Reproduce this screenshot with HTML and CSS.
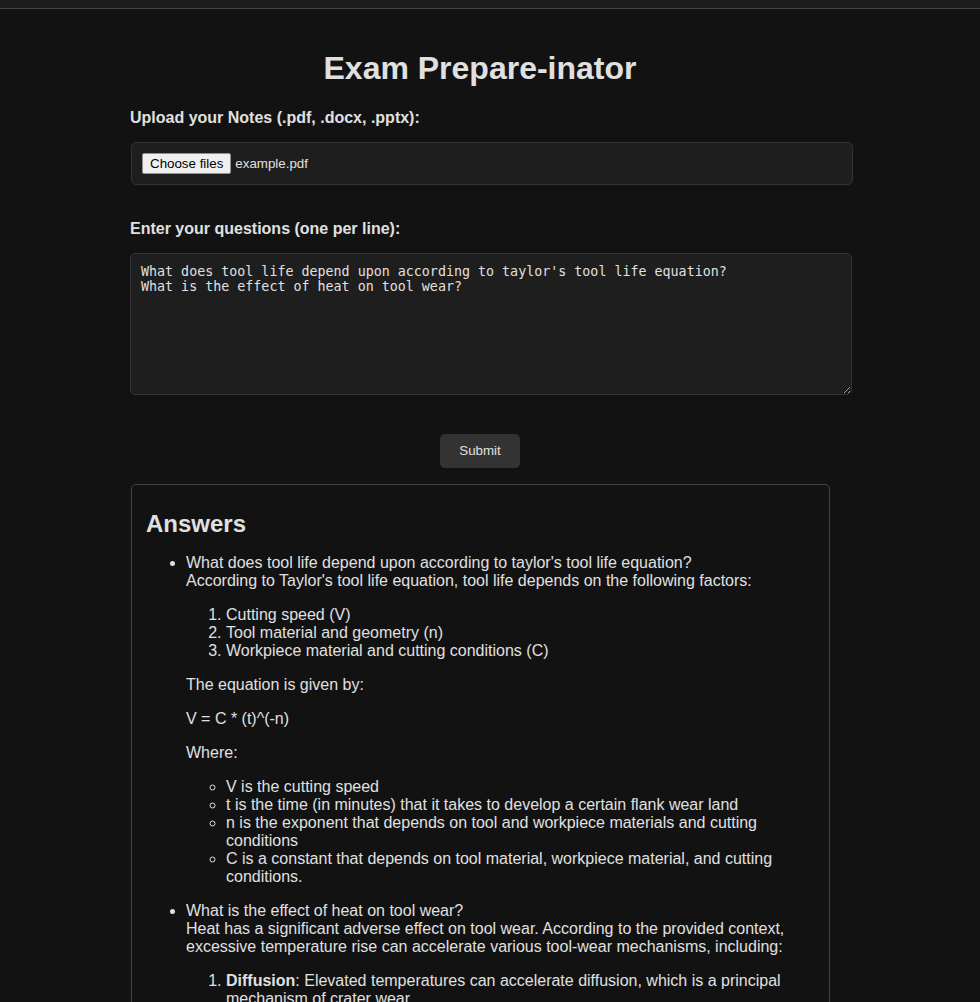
FILE: index.html
```html
<!DOCTYPE html>
<html lang="en">
<head>
<meta charset="utf-8">
<title>Exam Prepare-inator</title>
<link rel="stylesheet" href="styles.css">
</head>
<body>
<div class="topbar"></div>
<main class="page">
  <div class="container">
    <h1 class="title">Exam Prepare-inator</h1>
    <form class="form">
      <div class="field">
        <label class="label">Upload your Notes (.pdf, .docx, .pptx):</label>
        <div class="file-input"><span class="file-btn">Choose files</span><span class="file-name">example.pdf</span></div>
      </div>
      <div class="field field-questions">
        <label class="label">Enter your questions (one per line):</label>
        <textarea class="questions">What does tool life depend upon according to taylor's tool life equation?
What is the effect of heat on tool wear?</textarea>
      </div>
      <div class="actions"><button type="button" class="submit">Submit</button></div>
    </form>
    <section class="answers">
      <h2 class="answers-title">Answers</h2>
      <ul class="answer-list">
        <li>What does tool life depend upon according to taylor's tool life equation?<br>According to Taylor's tool life equation, tool life depends on the following factors:
          <ol class="sub">
            <li>Cutting speed (V)</li>
            <li>Tool material and geometry (n)</li>
            <li>Workpiece material and cutting conditions (C)</li>
          </ol>
          <p class="para">The equation is given by:</p>
          <p class="para">V = C * (t)^(-n)</p>
          <p class="para">Where:</p>
          <ul class="sub circle">
            <li>V is the cutting speed</li>
            <li>t is the time (in minutes) that it takes to develop a certain flank wear land</li>
            <li>n is the exponent that depends on tool and workpiece materials and cutting conditions</li>
            <li>C is a constant that depends on tool material, workpiece material, and cutting conditions.</li>
          </ul>
        </li>
        <li>What is the effect of heat on tool wear?<br>Heat has a significant adverse effect on tool wear. According to the provided context, excessive temperature rise can accelerate various tool-wear mechanisms, including:
          <ol class="sub">
            <li><strong>Diffusion</strong>: Elevated temperatures can accelerate diffusion, which is a principal mechanism of crater wear.</li>
            <li><strong>Oxidation</strong>: High temperatures promote oxidation of the tool surface, weakening the cutting edge.</li>
            <li><strong>Plastic deformation</strong>: The tool material softens at high temperatures, leading to deformation of the cutting edge.</li>
          </ol>
          <p class="para">Therefore, controlling the cutting temperature is essential for extending tool life.</p>
        </li>
      </ul>
    </section>
  </div>
</main>
</body>
</html>
```
FILE: styles.css
```css
html, body {
  margin: 0;
  padding: 0;
  background: #121212;
  color: #e0e0e0;
  font-family: "Liberation Sans", Arial, sans-serif;
}

.topbar {
  height: 8px;
  background: #1c1c1c;
  border-bottom: 1px solid #444;
}

.page {
  padding: 20px 20px 40px 0;
}

.container {
  max-width: 700px;
  margin: 0 auto;
}

.title {
  font-size: 32px;
  font-weight: bold;
  text-align: center;
  margin: 21px 0 22px;
  line-height: 37px;
  color: #e0e0e0;
}

.form {
  display: flex;
  flex-direction: column;
}

.field {
  display: flex;
  flex-direction: column;
  margin-bottom: 35px;
}

.label {
  font-size: 16px;
  font-weight: bold;
  line-height: 18px;
  margin-bottom: 15px;
  color: #e0e0e0;
}

.field-questions {
  margin-bottom: 39px;
}

.file-input {
  width: 100%;
  margin-left: 1px;
  padding: 10px;
  background: #1e1e1e;
  border: 1px solid #333;
  border-radius: 5px;
  display: flex;
  align-items: center;
  font-size: 13.333px;
  height: 21px;
  color: #e0e0e0;
}

.file-btn {
  background: #efefef;
  color: #000;
  border: 1px solid #8f8f8f;
  border-radius: 2px;
  padding: 1px 7px;
  line-height: 17px;
  margin-right: 4px;
  font-size: 13.333px;
}

.file-name {
  line-height: 17px;
}

.questions {
  width: 100%;
  height: 120px;
  padding: 10px;
  background: #1e1e1e;
  color: #e0e0e0;
  border: 1px solid #333;
  border-radius: 5px;
  font-family: "DejaVu Sans Mono", monospace;
  font-size: 13.333px;
  line-height: 15px;
  resize: vertical;
  margin: 0;
  box-sizing: content-box;
  outline: none;
}

.actions {
  display: flex;
  justify-content: center;
  margin-bottom: 16px;
}

.submit {
  background: #333;
  color: #e0e0e0;
  border: none;
  border-radius: 5px;
  padding: 10px 19.5px;
  font-family: "Liberation Sans", Arial, sans-serif;
  font-size: 13.333px;
  line-height: 14px;
  cursor: pointer;
}

.answers {
  box-sizing: border-box;
  width: 699px;
  margin-left: 1px;
  border: 1px solid #444;
  border-radius: 5px;
  padding: 15px 15px 20px 14px;
  background: #121212;
}

.answers-title {
  font-size: 24px;
  font-weight: bold;
  line-height: 28px;
  margin: 10px 0 16px;
  color: #e0e0e0;
}

.answer-list {
  margin: 0;
  padding-left: 40px;
  font-size: 16px;
  line-height: 18px;
}

.answer-list > li {
  margin-bottom: 16px;
}

.sub {
  margin: 16px 0;
  padding-left: 40px;
}

.circle {
  list-style-type: circle;
}

.para {
  margin: 16px 0;
}
```
